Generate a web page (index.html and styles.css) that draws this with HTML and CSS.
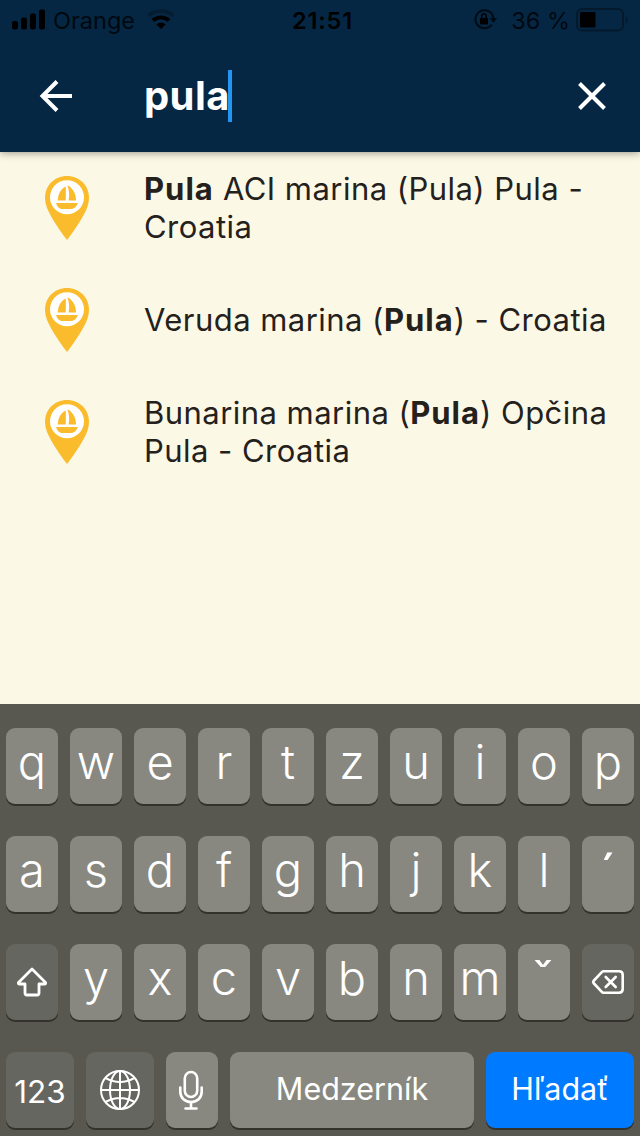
FILE: index.html
```html
<!DOCTYPE html>
<html lang="sk">
<head>
<meta charset="utf-8">
<title>Search</title>
<link rel="stylesheet" href="styles.css">
</head>
<body>
<svg class="defs" width="0" height="0" aria-hidden="true">
  <symbol id="pin" viewBox="0 0 44 64">
    <path fill="#fabb2d" d="M22 0C9.500 0 0 9.500 0 22c0 6.500 2.800 12.500 6.200 18.500C10.500 48 17 57.500 22 64c5-6.500 11.500-16 15.800-23.500C41.200 34.500 44 28.500 44 22 44 9.500 34.500 0 22 0z"/>
    <circle cx="22" cy="21.300" r="17" fill="#fff"/>
    <path fill="#fabb2d" d="M20.800 10.500V24.500h-8c.2-6.500 3-11.500 8-14zM22.300 9.200c5.500 2.500 9 9 8.700 15.300h-7.500c1.200-5 .8-10.300-1.200-15.300zM11 27h22c-1.500 3.800-4 6-6.500 6h-9c-3 0-5.500-2.200-6.500-6z"/>
  </symbol>
</svg>
<main class="screen">
  <header class="header">
    <div class="status">
      <div class="status-left">
        <svg width="34" height="22" viewBox="0 0 34 22"><rect x="0" y="12" width="6" height="8.500" rx="2"/><rect x="9" y="8.500" width="6" height="12" rx="2"/><rect x="18" y="4.500" width="6" height="16" rx="2"/><rect x="27" y="0.500" width="6" height="20" rx="2"/></svg>
        <span class="carrier">Orange</span>
        <svg class="wifi" width="28" height="22" viewBox="0 0 28 22"><path d="M1.500 6.800C8.500.300 19.500.300 26.500 6.800" fill="none" stroke="#051d31" stroke-width="3.600"/><path d="M6 11.500c4.600-4.300 11.400-4.300 16 0" fill="none" stroke="#000" stroke-width="3.800"/><path d="M14 20l-4.700-4.500c2.700-2.300 6.700-2.300 9.400 0z"/></svg>
      </div>
      <span class="time">21:51</span>
      <div class="status-right">
        <svg width="24" height="22" viewBox="0 0 24 22"><path d="M17.700 15.600A9 9 0 1 1 19.400 9" fill="none" stroke="#020b14" stroke-width="2"/><path d="M15.800 9h7.200l-3.600 5z" fill="#020b14"/><rect x="6" y="9" width="8" height="6.500" rx=".8"/><path d="M7.800 9V7a2.200 2.200 0 0 1 4.400 0v2" fill="none" stroke="#000" stroke-width="1.500"/></svg>
        <span class="percent">36 %</span>
        <svg class="battery" width="52" height="24" viewBox="0 0 52 24"><rect x="1" y="1" width="46" height="21.500" rx="5" fill="none" stroke="#041a2c" stroke-width="2"/><rect x="4" y="4" width="15.500" height="15.500" rx="1"/><path d="M49.500 8c3 1.500 3 6 0 7.500z" fill="#041a2c"/></svg>
      </div>
    </div>
    <div class="search">
      <svg class="back" width="34" height="34" viewBox="0 0 34 34"><path d="M33 17H4M18 2.500L3.500 17 18 31.500" fill="none" stroke="#fff" stroke-width="4"/></svg>
      <span class="query">pula</span><span class="caret"></span>
      <svg class="clear" width="28" height="28" viewBox="0 0 28 28"><path d="M1.500 1.500l25 25M26.500 1.500l-25 25" stroke="#fff" stroke-width="4"/></svg>
    </div>
  </header>
  <section class="results">
    <div class="row"><svg class="pin"><use href="#pin"/></svg><p><b>Pula</b> ACI marina (Pula) Pula -<br>Croatia</p></div>
    <div class="row"><svg class="pin"><use href="#pin"/></svg><p>Veruda marina (<b>Pula</b>) - Croatia</p></div>
    <div class="row"><svg class="pin"><use href="#pin"/></svg><p>Bunarina marina (<b>Pula</b>) Opčina<br>Pula - Croatia</p></div>
  </section>
  <section class="keyboard">
    <div class="keys">
      <span class="key">q</span><span class="key">w</span><span class="key">e</span><span class="key">r</span><span class="key">t</span><span class="key">z</span><span class="key">u</span><span class="key">i</span><span class="key">o</span><span class="key">p</span>
    </div>
    <div class="keys">
      <span class="key">a</span><span class="key">s</span><span class="key">d</span><span class="key">f</span><span class="key">g</span><span class="key">h</span><span class="key">j</span><span class="key">k</span><span class="key">l</span><span class="key accent">´</span>
    </div>
    <div class="keys">
      <span class="key dark icon"><svg width="32" height="32" viewBox="0 0 32 32"><path d="M16 3L2.500 16.500q-.5 1.500 1 1.500H9v9q0 2 2 2h10q2 0 2-2v-9h5.500q1.500 0 1-1.500z" fill="none" stroke="#fff" stroke-width="2.800" stroke-linejoin="round"/></svg></span>
      <span class="key">y</span><span class="key">x</span><span class="key">c</span><span class="key">v</span><span class="key">b</span><span class="key">n</span><span class="key">m</span><span class="key accent caron">ˇ</span>
      <span class="key dark icon"><svg width="34" height="26" viewBox="0 0 34 26"><path d="M12.500 2.300H28q3.700 0 3.700 3.700v14q0 3.700-3.700 3.700H12.500q-1 0-1.700-.8L2.500 14q-.8-1 0-2l8.300-8.900q.7-.8 1.700-.8z" fill="none" stroke="#fff" stroke-width="2.600" stroke-linejoin="round"/><path d="M14.700 8l10 10M24.700 8l-10 10" stroke="#fff" stroke-width="2.600" stroke-linecap="round"/></svg></span>
    </div>
    <div class="keys bottom">
      <span class="key dark label num">123</span>
      <span class="key dark icon"><svg width="42" height="42" viewBox="0 0 42 42" fill="none" stroke="#fff" stroke-width="2"><circle cx="21" cy="21" r="19"/><ellipse cx="21" cy="21" rx="10" ry="19"/><path d="M21 2v38M2 21h38M6.500 9q14.500 8 29 0M6.500 33q14.500-8 29 0"/></svg></span>
      <span class="key icon"><svg width="26" height="42" viewBox="0 0 26 42" fill="none" stroke="#fff" stroke-width="2.600" stroke-linecap="round"><rect x="5.800" y="3" width="12.400" height="25" rx="6.200"/><path d="M1.300 18.500v4.200C1.300 29 6 33 12 33s10.700-4 10.700-10.300v-4.200M12 33v6M6.500 39.500h11"/></svg></span>
      <span class="key label space">Medzerník</span>
      <span class="key label go">Hľadať</span>
    </div>
  </section>
</main>
</body>
</html>
```
FILE: styles.css
```css
* { box-sizing: border-box; }
body { margin: 0; font-family: Inter, "Liberation Sans", sans-serif; }
svg { display: block; flex: none; }
.defs { position: absolute; }
.screen { width: 640px; height: 1136px; display: flex; flex-direction: column; background: #fcf8e6; overflow: hidden; }

.header { height: 152px; flex: none; background: #052744; box-shadow: 0 1px 8px rgba(0, 0, 0, .4); z-index: 1; }
.status { height: 40px; display: grid; grid-template-columns: 1fr auto 1fr; align-items: center; padding: 0 12px; font-size: 23.500px; color: #000810; }
.status-left, .status-right { display: flex; align-items: center; }
.status-right { justify-content: flex-end; }
.carrier { margin-left: 7px; }
.wifi { margin-left: 12px; }
.time { font-weight: 600; color: #000; letter-spacing: .8px; margin-left: 5px; }
.percent { margin-left: 13px; white-space: nowrap; }
.battery { margin-left: 6px; }
.search { height: 112px; display: flex; align-items: center; padding: 0 34px 0 39px; color: #fff; }
.query { width: 84px; margin-left: 71px; font-size: 40px; font-weight: 700; line-height: 52px; letter-spacing: .4px; white-space: nowrap; }
.caret { width: 4px; height: 52px; background: #2196f3; }
.clear { margin-left: auto; }

.results { flex: 1; }
.row { height: 112px; display: flex; align-items: center; padding-left: 45px; }
.pin { width: 44px; height: 64px; margin-right: 55px; }
.row p { margin: 0; font-size: 31px; font-weight: 400; line-height: 38px; letter-spacing: .46px; color: #24211c; white-space: nowrap; }
.row b { font-weight: 700; letter-spacing: 1px; }

.keyboard { height: 432px; flex: none; background: #585750; padding: 24px 6px 0; display: flex; flex-direction: column; gap: 32px; }
.keys { display: grid; grid-template-columns: repeat(10, 52px); grid-template-rows: 76px; gap: 12px; height: 76px; }
.keys.bottom { grid-template-columns: 68px 68px 52px 244px 148px; }
.key { display: flex; align-items: center; justify-content: center; border-radius: 9px; background: #888881; box-shadow: 0 2px 0 #33322d; color: #fff; font-size: 47px; font-weight: 300; line-height: 60px; padding-bottom: 8px; }
.icon { padding-bottom: 0; }
.dark { background: #666660; }
.label { font-size: 30.500px; font-weight: 400; padding-bottom: 2px; }
.num { font-size: 31.500px; padding: 4px 0 0; }
.go { background: #007aff; }
.accent { font-size: 52px; font-weight: 400; padding: 0; }
.caron { padding-right: 2px; }
```
